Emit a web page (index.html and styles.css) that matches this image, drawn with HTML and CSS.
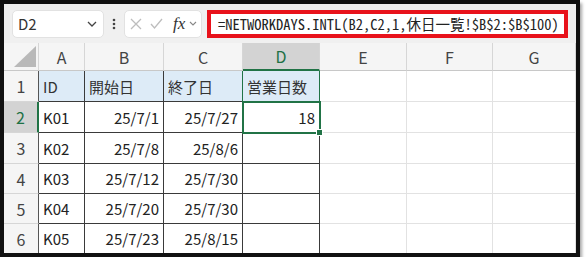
FILE: index.html
```html
<!DOCTYPE html>
<html lang="ja">
<head>
    <meta charset="UTF-8">
    <title>営業日数</title>
    <link rel="stylesheet" href="styles.css">
</head>
<body>
    <div class="sheet-window">
        <!-- Name box + formula bar -->
        <div class="toolbar">
            <div class="name-box">
                <span>D2</span>
                <svg width="10" height="6" viewBox="0 0 10 6"><polyline points="1,1 5,5 9,1" fill="none" stroke="#444" stroke-width="1.3"/></svg>
            </div>
            <div class="grip">
                <svg width="4" height="12" viewBox="0 0 4 12"><circle cx="2" cy="2" r="1.3" fill="#444"/><circle cx="2" cy="6" r="1.3" fill="#444"/><circle cx="2" cy="10" r="1.3" fill="#444"/></svg>
            </div>
            <div class="fx-box">
                <svg class="ic-cancel" width="12" height="12" viewBox="0 0 12 12"><path d="M1 1 L11 11 M11 1 L1 11" stroke="#bdbdbd" stroke-width="1.3" fill="none"/></svg>
                <svg class="ic-ok" width="13" height="11" viewBox="0 0 13 11"><polyline points="1,6 4.5,10 12,1" fill="none" stroke="#bdbdbd" stroke-width="1.3"/></svg>
                <span class="fx">fx</span>
                <svg width="8" height="5" viewBox="0 0 8 5"><polyline points="1,1 4,4 7,1" fill="none" stroke="#888" stroke-width="1.1"/></svg>
            </div>
            <div class="formula">=NETWORKDAYS.INTL(B2,C2,1,休日一覧!$B$2:$B$100)</div>
        </div>

        <!-- Worksheet -->
        <div class="grid">
            <div class="corner"><span class="corner-tri"></span></div>
            <div class="col-head">A</div>
            <div class="col-head">B</div>
            <div class="col-head">C</div>
            <div class="col-head selected">D</div>
            <div class="col-head">E</div>
            <div class="col-head">F</div>
            <div class="col-head">G</div>

            <div class="row-head">1</div>
            <div class="cell tbl title">ID</div>
            <div class="cell tbl title">開始日</div>
            <div class="cell tbl title edge-green">終了日</div>
            <div class="cell tbl title edge-green">営業日数</div>
            <div class="cell"></div>
            <div class="cell"></div>
            <div class="cell"></div>

            <div class="row-head selected">2</div>
            <div class="cell tbl">K01</div>
            <div class="cell tbl num">25/7/1</div>
            <div class="cell tbl num">25/7/27</div>
            <div class="cell tbl num active">18</div>
            <div class="cell"></div>
            <div class="cell"></div>
            <div class="cell"></div>

            <div class="row-head">3</div>
            <div class="cell tbl">K02</div>
            <div class="cell tbl num">25/7/8</div>
            <div class="cell tbl num">25/8/6</div>
            <div class="cell tbl num"></div>
            <div class="cell"></div>
            <div class="cell"></div>
            <div class="cell"></div>

            <div class="row-head">4</div>
            <div class="cell tbl">K03</div>
            <div class="cell tbl num">25/7/12</div>
            <div class="cell tbl num">25/7/30</div>
            <div class="cell tbl num"></div>
            <div class="cell"></div>
            <div class="cell"></div>
            <div class="cell"></div>

            <div class="row-head">5</div>
            <div class="cell tbl">K04</div>
            <div class="cell tbl num">25/7/20</div>
            <div class="cell tbl num">25/7/30</div>
            <div class="cell tbl num"></div>
            <div class="cell"></div>
            <div class="cell"></div>
            <div class="cell"></div>

            <div class="row-head">6</div>
            <div class="cell tbl">K05</div>
            <div class="cell tbl num">25/7/23</div>
            <div class="cell tbl num">25/8/15</div>
            <div class="cell tbl num"></div>
            <div class="cell"></div>
            <div class="cell"></div>
            <div class="cell"></div>
        </div>
    </div>
</body>
</html>
```

FILE: styles.css
```css
/* Base */
body {
    margin: 0;
    padding: 0;
    background-color: #fff;
    font-family: 'Noto Sans CJK JP', 'Noto Sans', sans-serif;
    color: #222;
}

/* Black screenshot frame */
.sheet-window {
    width: 572px;
    height: 249px;
    border: 4px solid #111;
    box-shadow: 2px 3px 3px rgba(0, 0, 0, 0.35);
    overflow: hidden;
    background-color: #fff;
}

/* Formula bar row */
.toolbar {
    height: 39px;
    padding: 0 8px;
    display: flex;
    align-items: center;
    background-color: #f0f0f0;
    box-sizing: border-box;
}
.name-box, .fx-box {
    height: 28px;
    box-sizing: border-box;
    background-color: #fff;
    border: 1px solid #e2e2e2;
    border-radius: 5px;
    display: flex;
    align-items: center;
}
.name-box {
    width: 92px;
    padding: 0 6px 0 5px;
    justify-content: space-between;
    font-size: 15px;
    color: #333;
}
.grip {
    width: 20px;
    display: flex;
    justify-content: center;
}
.fx-box {
    width: 78px;
    padding-left: 5px;
}
.ic-ok {
    margin-left: 8px;
}
.fx {
    margin-left: 10px;
    margin-right: 4px;
    font-family: 'Liberation Serif', serif;
    font-style: italic;
    font-size: 17px;
    color: #333;
}
.formula {
    flex: 1;
    height: 28px;
    margin-left: 5px;
    padding-left: 7px;
    box-sizing: border-box;
    border: 4px solid #e8121b;
    background-color: #fff;
    display: flex;
    align-items: center;
    font-family: 'Noto Sans Mono CJK JP', 'Liberation Mono', monospace;
    font-size: 14.5px;
    color: #222;
    white-space: nowrap;
    overflow: hidden;
}

/* Worksheet grid */
.grid {
    display: grid;
    grid-template-columns: 35px 46px 79px 79px 77px 87px 86px 83px;
    grid-template-rows: 28px repeat(3, 31px) repeat(3, 30px);
}
.grid > div {
    box-sizing: border-box;
    display: flex;
    align-items: center;
}

.corner, .col-head, .row-head {
    background-color: #f5f5f5;
    color: #444;
    font-size: 16px;
    justify-content: center;
}
.corner {
    position: relative;
    border-right: 1px solid #d6d6d6;
    border-bottom: 1px solid #c8c8c8;
}
.corner-tri {
    position: absolute;
    right: 2px;
    bottom: 3px;
    width: 22px;
    height: 21px;
    background-color: #b9b9b9;
    clip-path: polygon(100% 0, 100% 100%, 0 100%);
}
.col-head {
    border-right: 1px solid #d6d6d6;
    border-bottom: 1px solid #c8c8c8;
}
.col-head.selected {
    background-color: #d3d3d3;
    color: #1e7145;
    border-bottom: 2px solid #217346;
}
.row-head {
    border-right: 1px solid #555;
    border-bottom: 1px solid #d6d6d6;
}
.row-head.selected {
    background-color: #d3d3d3;
    color: #1e7145;
    border-right: 2px solid #217346;
}

.cell {
    padding: 0 4px;
    font-size: 15px;
    color: #222;
    border-right: 1px solid #e2e2e2;
    border-bottom: 1px solid #e2e2e2;
}
.cell.tbl {
    border-right-color: #3a3a3a;
    border-bottom-color: #3a3a3a;
}
.cell.title {
    background-color: #ddebf7;
    color: #333;
}
.cell.edge-green {
    border-right-color: #217346;
}
.cell.num {
    justify-content: flex-end;
}

/* Selected cell D2 */
.cell.active {
    position: relative;
    z-index: 1;
    outline: 2px solid #217346;
    outline-offset: -1px;
}
.cell.active::after {
    content: '';
    position: absolute;
    right: -4px;
    bottom: -4px;
    width: 5px;
    height: 5px;
    background-color: #217346;
    border: 1px solid #fff;
}
```
